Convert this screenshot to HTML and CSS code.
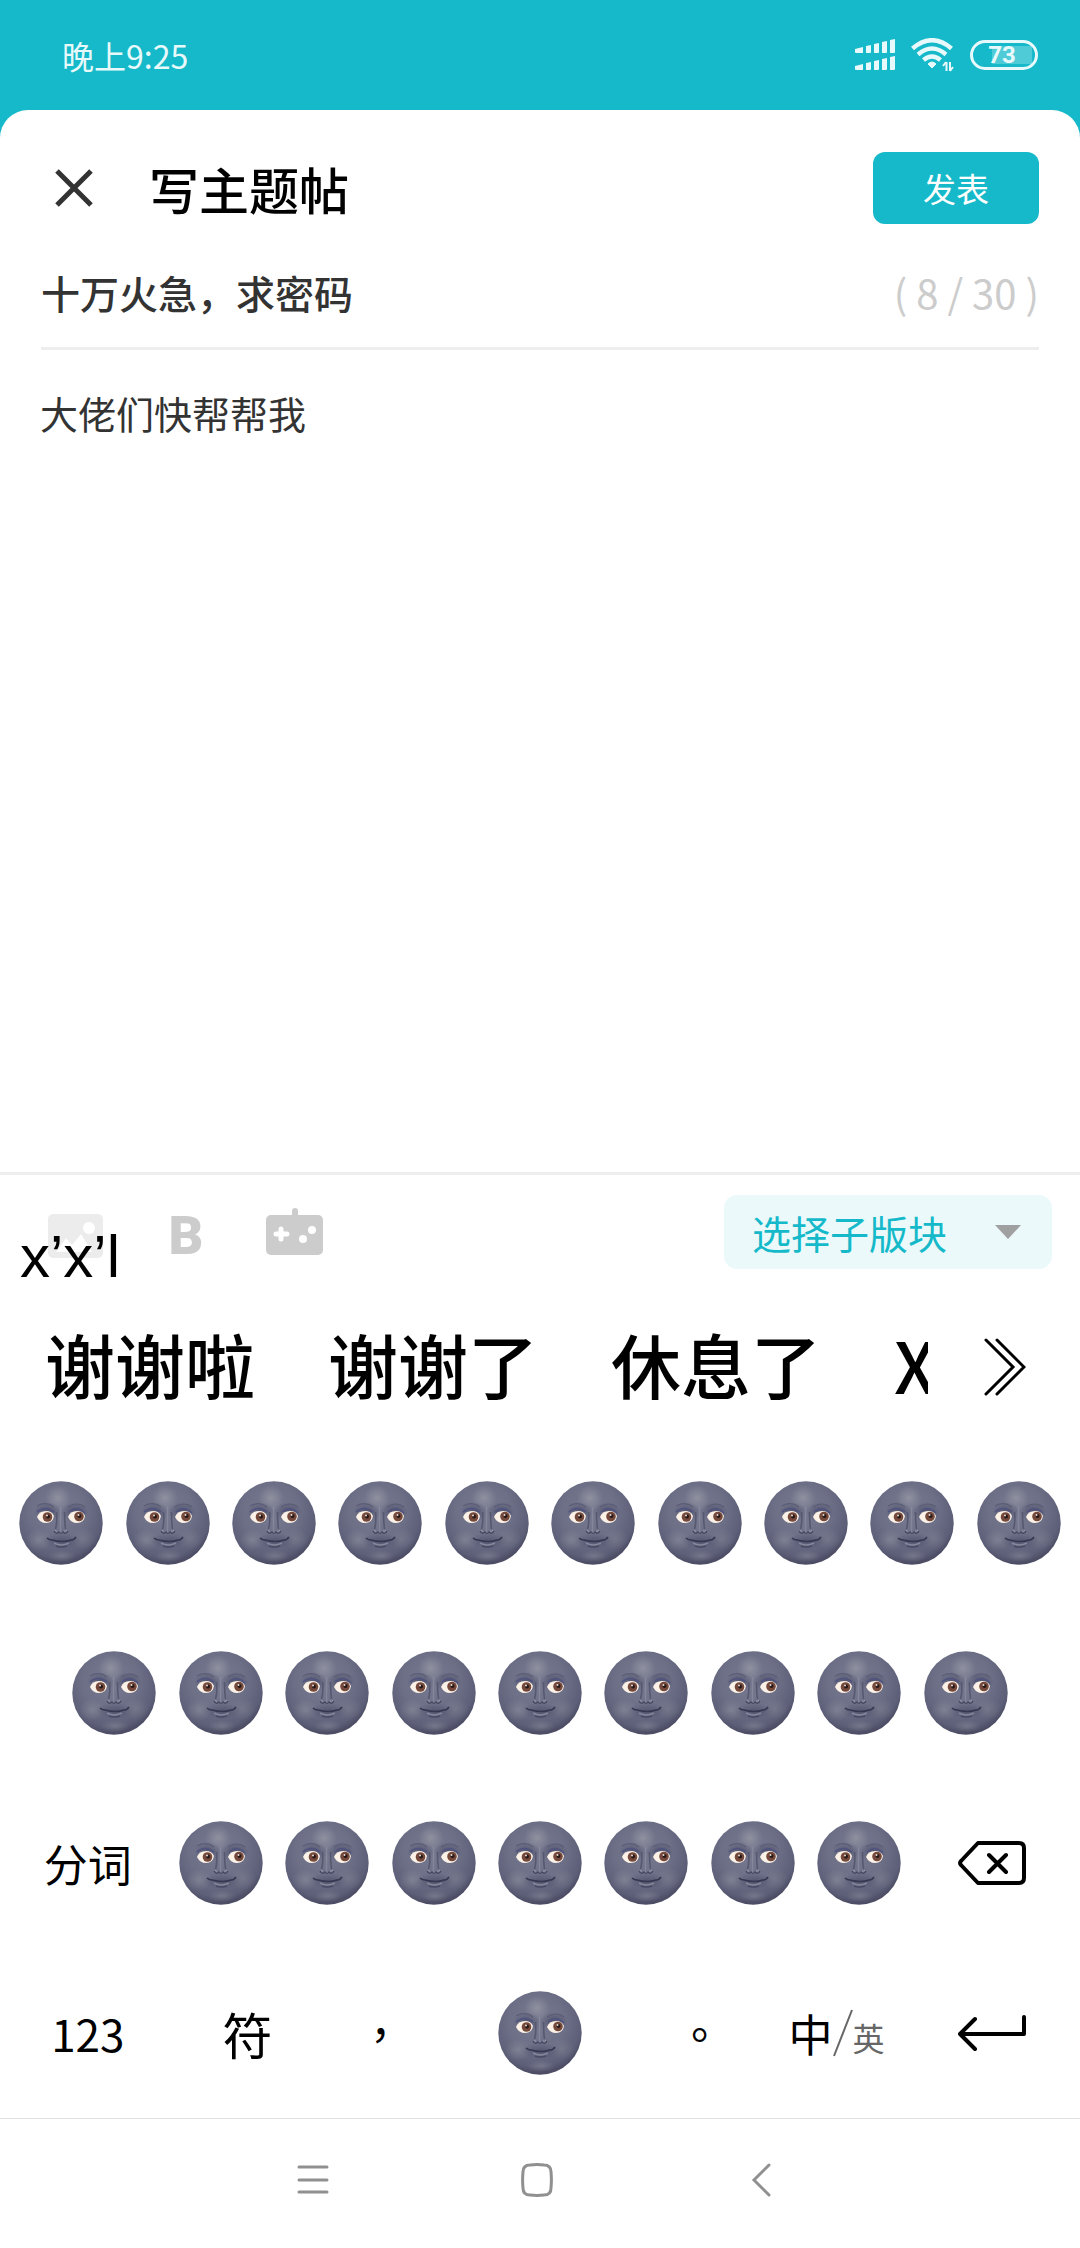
FILE: index.html
```html
<!DOCTYPE html>
<html lang="zh-CN">
<head>
  <meta charset="UTF-8">
  <meta name="viewport" content="width=device-width, initial-scale=1">
  <title>写主题帖</title>
  <link rel="stylesheet" href="styles.css">
</head>
<body>
  <!-- shared moon face for the keys -->
  <svg class="defs" width="0" height="0" aria-hidden="true">
    <defs>
      <radialGradient id="skin" cx="0.46" cy="0.36" r="0.62">
        <stop offset="0" stop-color="#777a90"/>
        <stop offset="0.55" stop-color="#6c6f86"/>
        <stop offset="0.88" stop-color="#5d5f78"/>
        <stop offset="1" stop-color="#4d4e66"/>
      </radialGradient>
      <radialGradient id="light">
        <stop offset="0" stop-color="#9698a4" stop-opacity="0.8"/>
        <stop offset="1" stop-color="#9698a4" stop-opacity="0"/>
      </radialGradient>
      <radialGradient id="shade">
        <stop offset="0" stop-color="#43455f" stop-opacity="0.7"/>
        <stop offset="1" stop-color="#43455f" stop-opacity="0"/>
      </radialGradient>
      <symbol id="moon" viewBox="0 0 84 84">
        <circle cx="42" cy="42" r="41.7" fill="url(#skin)"/>
        <ellipse cx="39" cy="17" rx="13" ry="13" fill="url(#light)"/>
        <ellipse cx="20" cy="59" rx="13" ry="11" fill="url(#light)" opacity="0.6"/>
        <ellipse cx="64" cy="58" rx="13" ry="11" fill="url(#light)" opacity="0.4"/>
        <ellipse cx="43" cy="75" rx="14" ry="6" fill="url(#light)" opacity="0.5"/>
        <ellipse cx="29" cy="31" rx="14" ry="10" fill="url(#shade)"/>
        <ellipse cx="56" cy="31" rx="14" ry="10" fill="url(#shade)"/>
        <ellipse cx="43" cy="60" rx="19" ry="8" fill="url(#shade)" opacity="0.8"/>
        <path d="M18 31q8-7 17 0M50 31q8-7 16 1" fill="none" stroke="#50537f" stroke-width="1.500"/>
        <path d="M18 25q9-5 17 1M49 26q9-6 17 0" fill="none" stroke="#5a5d75" stroke-width="1.200"/>
        <path d="M37.500 31q1 10-1 17M45.500 31q0 10 1 17" fill="none" stroke="#565870" stroke-width="1.600"/>
        <path d="M41.500 26v25" stroke="#9193a4" stroke-width="1.500" opacity="0.6"/>
        <path d="M35 50q2 4 5 1q2 3 4 0q3 3 5-1" fill="none" stroke="#44465f" stroke-width="1.200"/>
        <path d="M36 49q1 2 2 1M45 50q2 1 3-1" fill="none" stroke="#9a9cab" stroke-width="1"/>
        <path d="M18 36q2-6 9-6q6 0 8 5q-1 7-8 7q-6 0-9-6z" fill="#fbf1e6"/>
        <path d="M49 36q2-6 9-6q6 0 8 5q-1 7-8 7q-6 0-9-6z" fill="#fbf1e6"/>
        <circle cx="28.500" cy="36" r="4.800" fill="#74493b"/>
        <circle cx="60" cy="35.500" r="4.800" fill="#74493b"/>
        <circle cx="29" cy="35.500" r="2" fill="#241716"/>
        <circle cx="60.500" cy="35" r="2" fill="#241716"/>
        <circle cx="28" cy="34.500" r="1" fill="#e9dcd6"/>
        <circle cx="59.500" cy="34" r="1" fill="#e9dcd6"/>
        <path d="M28 57q2 2 5 2q11 3 19 0q3 0 5-3" fill="none" stroke="#353750" stroke-width="1.500"/>
        <path d="M35 62q7 4 15 0" fill="none" stroke="#85889b" stroke-width="1.500"/>
        <path d="M37 65q5 2 11 0" fill="none" stroke="#484a64" stroke-width="1.500"/>
      </symbol>
    </defs>
  </svg>

  <div class="status">
    <span class="time">晚上9:25</span>
    <div class="status-icons">
      <svg class="signal" viewBox="0 0 40 32" aria-hidden="true">
        <g id="bars" fill="#e8f9fb">
          <path d="M0 10l8-2v6H1q-1 0-1-1z"/>
          <path d="M11 7l5-1v7q0 1-1 1h-4z"/>
          <path d="M19 5l5-1v9q0 1-1 1h-4z"/>
          <path d="M27 3l5-1v11q0 1-1 1h-4z"/>
          <path d="M35 1l5-1v13q0 1-1 1h-4z"/>
        </g>
        <use href="#bars" y="17"/>
      </svg>
      <svg class="wifi" viewBox="0 0 43 34" aria-hidden="true">
        <g fill="none" stroke="#e8f9fb" stroke-width="4.500">
          <path d="M1.500 10.500q19.500-16.500 39 0"/>
          <path d="M7 16.500q14-12 28 0"/>
          <path d="M12.500 22q8.500-7 17 0"/>
        </g>
        <path d="M17 26q4-4 8 0l-4 4z" fill="#e8f9fb" stroke="#e8f9fb"/>
        <path d="M35.500 24v9M35 24l-3 4M39 33v-9M39 33l3-4" fill="none" stroke="#e8f9fb" stroke-width="2"/>
      </svg>
      <span class="battery">73</span>
    </div>
  </div>

  <main class="sheet">
    <header class="header">
      <button class="close" aria-label="关闭">
        <svg viewBox="0 0 38 38"><path d="M2 2l34 34M36 2L2 36"/></svg>
      </button>
      <h1>写主题帖</h1>
      <button class="publish">发表</button>
    </header>

    <div class="subject">
      <input type="text" aria-label="标题" maxlength="30" value="十万火急，求密码">
      <span class="count">( 8 / 30 )</span>
    </div>

    <textarea class="content" aria-label="正文">大佬们快帮帮我</textarea>

    <div class="tools">
      <button class="tool" aria-label="图片">
        <svg viewBox="0 0 58 60">
          <rect y="12" width="55" height="44" rx="5" fill="#ececec"/>
          <circle cx="41" cy="26" r="6" fill="#fff"/>
          <path d="M8 50l10-14 6 7 9-11 11 18z" fill="#fff"/>
        </svg>
      </button>
      <button class="tool bold" aria-label="加粗">B</button>
      <button class="tool" aria-label="游戏">
        <svg viewBox="0 0 58 60">
          <path d="M29 9v8" stroke="#ccc" stroke-width="6" stroke-linecap="round"/>
          <rect y="13" width="57" height="40" rx="5" fill="#ccc"/>
          <path d="M15 27v10M10 32h11" stroke="#fff" stroke-width="5" stroke-linecap="round"/>
          <circle cx="46" cy="28" r="4" fill="#fff"/>
          <circle cx="37" cy="37" r="4" fill="#fff"/>
        </svg>
      </button>
      <label class="board">
        <select aria-label="选择子版块">
          <option>选择子版块</option>
        </select>
      </label>
      <span class="composing">x’x’l</span>
    </div>
  </main>

  <section class="keyboard">
    <div class="candidates">
      <div class="words">
        <button>谢谢啦</button>
        <button>谢谢了</button>
        <button>休息了</button>
        <button>X</button>
      </div>
      <button class="more" aria-label="更多">
        <svg viewBox="0 0 42 58"><path d="M2 2l27 27L2 56M13 2l27 27-27 27"/></svg>
      </button>
    </div>

    <div class="row">
      <button class="key" aria-label="q"><svg class="moon"><use href="#moon"/></svg></button>
      <button class="key" aria-label="w"><svg class="moon"><use href="#moon"/></svg></button>
      <button class="key" aria-label="e"><svg class="moon"><use href="#moon"/></svg></button>
      <button class="key" aria-label="r"><svg class="moon"><use href="#moon"/></svg></button>
      <button class="key" aria-label="t"><svg class="moon"><use href="#moon"/></svg></button>
      <button class="key" aria-label="y"><svg class="moon"><use href="#moon"/></svg></button>
      <button class="key" aria-label="u"><svg class="moon"><use href="#moon"/></svg></button>
      <button class="key" aria-label="i"><svg class="moon"><use href="#moon"/></svg></button>
      <button class="key" aria-label="o"><svg class="moon"><use href="#moon"/></svg></button>
      <button class="key" aria-label="p"><svg class="moon"><use href="#moon"/></svg></button>
    </div>
    <div class="row">
      <button class="key" aria-label="a"><svg class="moon"><use href="#moon"/></svg></button>
      <button class="key" aria-label="s"><svg class="moon"><use href="#moon"/></svg></button>
      <button class="key" aria-label="d"><svg class="moon"><use href="#moon"/></svg></button>
      <button class="key" aria-label="f"><svg class="moon"><use href="#moon"/></svg></button>
      <button class="key" aria-label="g"><svg class="moon"><use href="#moon"/></svg></button>
      <button class="key" aria-label="h"><svg class="moon"><use href="#moon"/></svg></button>
      <button class="key" aria-label="j"><svg class="moon"><use href="#moon"/></svg></button>
      <button class="key" aria-label="k"><svg class="moon"><use href="#moon"/></svg></button>
      <button class="key" aria-label="l"><svg class="moon"><use href="#moon"/></svg></button>
    </div>
    <div class="row">
      <button class="key wide">分词</button>
      <button class="key" aria-label="z"><svg class="moon"><use href="#moon"/></svg></button>
      <button class="key" aria-label="x"><svg class="moon"><use href="#moon"/></svg></button>
      <button class="key" aria-label="c"><svg class="moon"><use href="#moon"/></svg></button>
      <button class="key" aria-label="v"><svg class="moon"><use href="#moon"/></svg></button>
      <button class="key" aria-label="b"><svg class="moon"><use href="#moon"/></svg></button>
      <button class="key" aria-label="n"><svg class="moon"><use href="#moon"/></svg></button>
      <button class="key" aria-label="m"><svg class="moon"><use href="#moon"/></svg></button>
      <button class="key wide" aria-label="删除">
        <svg class="line" viewBox="0 0 68 44">
          <path d="M20 2h41q5 0 5 5v30q0 5-5 5H20L3 24q-2-2 0-4zM31 14l17 17M48 14L31 31"/>
        </svg>
      </button>
    </div>
    <div class="row">
      <button class="key wide">123</button>
      <button class="key wide symbol">符</button>
      <button class="key punct">，</button>
      <button class="key space" aria-label="空格"><svg class="moon"><use href="#moon"/></svg></button>
      <button class="key punct">。</button>
      <button class="key wide lang">中<svg class="slash" viewBox="0 0 20 48"><path d="M1 47L19 1"/></svg><small>英</small></button>
      <button class="key wide" aria-label="换行">
        <svg class="line" viewBox="0 0 68 44"><path d="M66 6v17H2M17 8L2 23l15 15"/></svg>
      </button>
    </div>
  </section>

  <nav class="nav">
    <button aria-label="菜单">
      <svg viewBox="0 0 34 34"><path d="M3 4h28M3 17h28M3 29h28"/></svg>
    </button>
    <button aria-label="主屏幕">
      <svg viewBox="0 0 34 34"><path d="M3 9q0-7 7-7q7-.8 14 0q7 0 7 7q.8 8 0 16q0 7-7 7q-7 .8-14 0q-7 0-7-7q-.8-8 0-16z"/></svg>
    </button>
    <button aria-label="返回">
      <svg viewBox="0 0 34 34"><path d="M25 2L10 17l15 15"/></svg>
    </button>
  </nav>
</body>
</html>
```
FILE: styles.css
```css
* {
  box-sizing: border-box;
}

body {
  margin: 0;
  min-height: 100vh;
  display: flex;
  flex-direction: column;
  background-color: #15b9c9;
  font-family: "Noto Sans CJK SC", sans-serif;
  color: #000;
}

button,
input,
select,
textarea {
  font-family: inherit;
  color: inherit;
  border: none;
  padding: 0;
  margin: 0;
  background: none;
  outline: none;
}

button {
  display: flex;
  align-items: center;
  justify-content: center;
  cursor: pointer;
}

.defs {
  position: absolute;
}

/* Status bar */
.status {
  height: 110px;
  padding: 0 42px 0 62px;
  display: flex;
  align-items: center;
  justify-content: space-between;
  color: #e8f9fb;
}

.time {
  font-size: 32px;
}

.status-icons {
  display: flex;
  align-items: center;
  gap: 16px;
}

.signal {
  width: 40px;
  height: 32px;
}

.wifi {
  width: 43px;
  height: 34px;
}

.battery {
  width: 68px;
  height: 30px;
  padding-right: 4px;
  border: 3px solid #e8f9fb;
  border-radius: 15px;
  font: bold 24px/25px Roboto, sans-serif;
  text-align: center;
  background: linear-gradient(to right, transparent 16px, #4fcbd7 16px) no-repeat center / 56px 18px;
}

/* Editor */
.sheet {
  flex: 1;
  display: flex;
  flex-direction: column;
  background-color: #fff;
  border-radius: 28px 28px 0 0;
}

.header {
  display: flex;
  align-items: center;
  padding: 42px 41px 0 55px;
}

.close svg {
  display: block;
  width: 38px;
  height: 38px;
  stroke: #333;
  stroke-width: 5;
}

.header h1 {
  flex: 1;
  margin: 0 0 0 56px;
  font-size: 50px;
  line-height: 68px;
  font-weight: 500;
}

.publish {
  width: 166px;
  height: 72px;
  border-radius: 12px;
  background-color: #15b9c9;
  color: #fff;
  font-size: 33px;
}

.subject {
  display: flex;
  align-items: center;
  margin: 12px 41px 0;
  height: 114px;
  border-bottom: 3px solid #eee;
  font-size: 40px;
}

.subject input {
  flex: 1;
  min-width: 0;
  font-size: 39px;
  font-weight: 500;
  color: #333;
}

.count {
  color: #ccc;
}

.content {
  flex: 1;
  resize: none;
  padding: 34px 40px;
  font-size: 38px;
  line-height: 58px;
  color: #333;
}

.tools {
  position: relative;
  display: flex;
  align-items: center;
  padding: 20px 28px 26px 48px;
  border-top: 3px solid #eee;
}

.tool {
  width: 58px;
  height: 60px;
  margin-right: 51px;
}

.tool svg {
  width: 100%;
  height: 100%;
}

.bold {
  padding-top: 8px;
  font: 900 54px/60px Roboto, sans-serif;
  color: #ccc;
}

.board {
  display: flex;
  align-items: center;
  width: 328px;
  height: 74px;
  margin-left: auto;
  padding: 0 31px 0 28px;
  border-radius: 13px;
  background-color: #ebf9fb;
  color: #15b9c9;
}

.board select {
  flex: 1;
  min-width: 0;
  appearance: none;
  font-size: 39px;
}

.board::after {
  content: "";
  width: 26px;
  height: 14px;
  background-color: #a0a0a0;
  clip-path: polygon(0 0, 100% 0, 50% 100%);
}

/* Pinyin preview floats over the toolbar */
.composing {
  position: absolute;
  left: 20px;
  bottom: 8px;
  font: 60px/60px "Liberation Sans", sans-serif;
}

/* Keyboard */
.keyboard {
  background-color: #fff;
}

.candidates {
  display: flex;
  align-items: center;
  height: 143px;
  padding-right: 54px;
}

.words {
  flex: 1;
  display: flex;
  gap: 73px;
  margin-right: 56px;
  padding: 0 0 6px 45px;
  overflow: hidden;
}

.words button {
  flex: none;
  font-size: 70px;
  line-height: 110px;
  font-weight: 500;
}

.more svg {
  width: 42px;
  height: 58px;
  fill: none;
  stroke: #000;
  stroke-width: 3;
  stroke-linecap: round;
}

.row {
  display: flex;
  justify-content: center;
  height: 170px;
  padding: 0 8px;
}

.key {
  flex: 0 0 10%;
  font-size: 44px;
}

.wide {
  flex-basis: 15%;
}

.space {
  flex-basis: 20%;
}

.symbol {
  font-size: 50px;
}

.punct {
  font-family: "Noto Sans CJK TC", sans-serif;
}

.moon {
  width: 84px;
  height: 84px;
}

.line {
  width: 68px;
  height: 44px;
  fill: none;
  stroke: #000;
  stroke-width: 4;
  stroke-linecap: round;
  stroke-linejoin: round;
}

.slash {
  width: 20px;
  height: 48px;
  stroke: #666;
  stroke-width: 2;
}

.lang {
  padding-left: 8px;
}

.lang small {
  padding-top: 8px;
  font-size: 32px;
  color: #666;
}

/* System navigation */
.nav {
  display: flex;
  justify-content: center;
  align-items: center;
  gap: 190px;
  height: 130px;
  padding: 0 6px 8px 0;
  border-top: 1px solid #e0e0e0;
  background-color: #fff;
}

.nav svg {
  width: 34px;
  height: 34px;
  fill: none;
  stroke: #909090;
  stroke-width: 3;
  stroke-linecap: round;
}
```
